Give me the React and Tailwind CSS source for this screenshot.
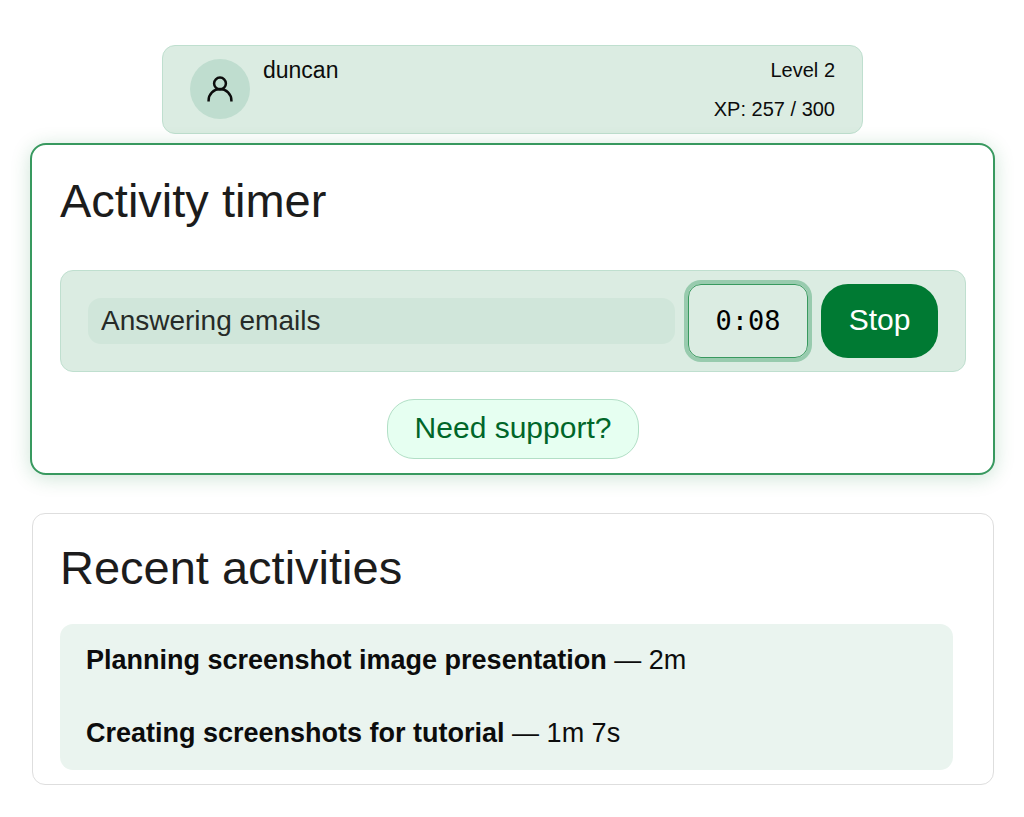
import React, { useState } from 'react';

const activities = [
    { id: 1, name: 'Planning screenshot image presentation', duration: '2m' },
    { id: 2, name: 'Creating screenshots for tutorial', duration: '1m 7s' },
];

const UserIcon = () => (
    <svg className="size-8" viewBox="0 0 32 32" fill="none" stroke="#0c0c0c" strokeWidth="2.5" aria-hidden="true">
        <circle cx="16" cy="10.5" r="5.9" />
        <path d="M4.6 28.5v-1.1a11.4 11.4 0 0 1 22.8 0v1.1" />
    </svg>
);

const ProfileBar = ({ name, level, xp, nextXp }) => (
    <header className="mx-auto flex w-full max-w-[701px] gap-[13px] rounded-[13px] border border-[#bfdfcf] bg-[#dbece2] px-[27px] py-[13px]">
        <div className="flex size-[60px] shrink-0 items-center justify-center rounded-full bg-[#bfddcf]">
            <UserIcon />
        </div>
        <p className="text-[23px] leading-[22px]">{name}</p>
        <div className="ml-auto flex flex-col gap-[17px] text-right text-[20px] leading-[22px]">
            <p>Level {level}</p>
            <p>XP: {xp} / {nextXp}</p>
        </div>
    </header>
);

const ActivityTimer = () => {
    const [activity, setActivity] = useState('Answering emails');

    return (
        <section className="mt-[9px] rounded-[16px] border-2 border-[#38995f] bg-white pt-[28px] pr-[27px] pb-[14px] pl-[28px] shadow-[0_3px_20px_rgba(0,122,51,0.2)]">
            <h2 className="text-[47px] leading-[56px] text-[#1c1c1c]">Activity timer</h2>
            <div className="mt-[41px] flex items-center gap-[13px] rounded-[13px] border border-[#bfdfcf] bg-[#dbece2] px-[27px] py-[13px]">
                <input
                    type="text"
                    aria-label="Activity"
                    value={activity}
                    onChange={(e) => setActivity(e.target.value)}
                    className="h-[46px] min-w-0 flex-1 rounded-[13px] bg-[#d0e6da] px-[13px] text-[28px] text-[#262b28] outline-none"
                />
                <time className="flex h-[74px] w-[120px] shrink-0 items-center justify-center rounded-[13px] border border-[#38995f] font-['DejaVu_Sans_Mono',monospace] text-[27px] text-black ring-4 ring-[#98cbae]">
                    0:08
                </time>
                <button type="button" className="h-[74px] w-[117px] shrink-0 rounded-[27px] bg-[#007a33] pb-1 text-[30px] text-white">
                    Stop
                </button>
            </div>
            <button
                type="button"
                className="mx-auto mt-[27px] block h-[60px] rounded-[27px] border border-[#b2dfc6] bg-[#e6fff1] px-[27px] pb-1 text-[30px] text-[#006629]"
            >
                Need support?
            </button>
        </section>
    );
};

const RecentActivities = () => (
    <section className="mt-[38px] mr-px ml-[2px] rounded-[13px] border border-[#dedede] bg-white px-[27px] pt-[26px] pb-[14px]">
        <h2 className="text-[47px] leading-[56px] text-[#1c1c1c]">Recent activities</h2>
        <ul className="mt-[28px] mr-[13px] rounded-[13px] bg-[#eaf4ef] px-[26px]">
            {activities.map((item) => (
                <li key={item.id} className="py-5 text-[27px] leading-[33px]">
                    <strong>{item.name}</strong> — {item.duration}
                </li>
            ))}
        </ul>
    </section>
);

export default function App() {
    return (
        <main className="bg-white pt-[45px] pr-[29px] pb-8 pl-[30px] font-['Liberation_Sans',Arial,sans-serif] text-[#0c0c0c]">
            <ProfileBar name="duncan" level={2} xp={257} nextXp={300} />
            <ActivityTimer />
            <RecentActivities />
        </main>
    );
}
